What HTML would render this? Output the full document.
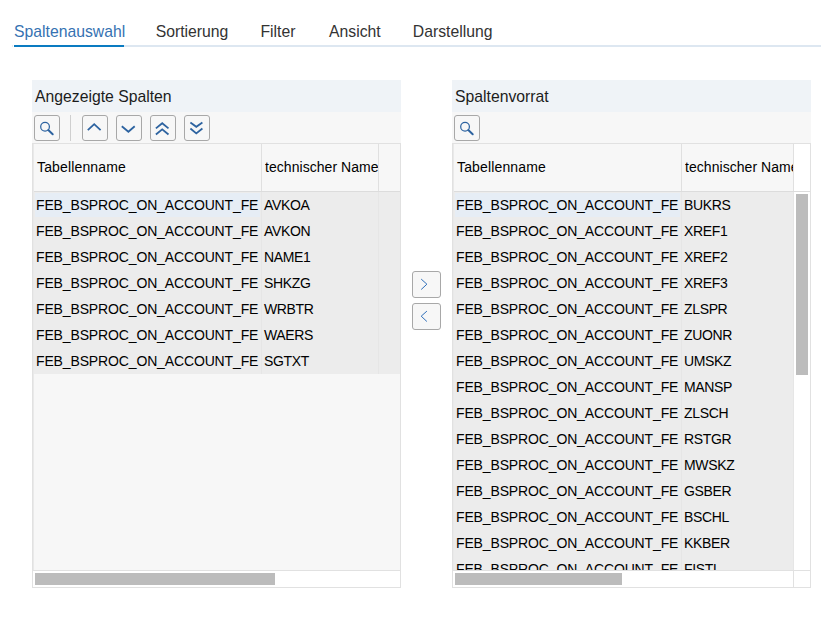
<!DOCTYPE html>
<html><head><meta charset="utf-8">
<style>
*{margin:0;padding:0;box-sizing:border-box}
html,body{width:833px;height:639px;background:#fff;overflow:hidden;font-family:"Liberation Sans",sans-serif;color:#000}
.a{position:absolute}
.tab{position:absolute;top:22px;font-size:15.75px;line-height:20px;color:#333;white-space:nowrap}
.hdr{top:80px;height:32px;background:#eff3f7}
.ttl{top:87px;font-size:15.75px;line-height:20px;color:#1c1c1c;white-space:nowrap}
.tb{top:112px;height:31px;background:#f7f7f7}
.btn{position:absolute;border:1px solid #a8a8a8;border-radius:3px;background:#f7f7f7}
.cell{font-size:14px;line-height:16px;white-space:nowrap;color:#000}
.feb{letter-spacing:-0.14px}
.row{height:26px;background:#ececec}
.th{font-size:14px;line-height:16px;white-space:nowrap;color:#000}
</style></head><body>

<div class="tab" style="left:14px;color:#3572b2">Spaltenauswahl</div>
<div class="tab" style="left:155.7px">Sortierung</div>
<div class="tab" style="left:260.5px">Filter</div>
<div class="tab" style="left:329px">Ansicht</div>
<div class="tab" style="left:412.8px">Darstellung</div>
<div class="a" style="left:124px;top:45px;width:697px;height:2px;background:#dde7f1"></div>
<div class="a" style="left:12px;top:45px;width:1px;height:2px;background:#e3eaf3"></div>
<div class="a" style="left:14px;top:45px;width:110px;height:2px;background:#0a7bc1"></div>
<div class="a hdr" style="left:32px;width:369px"></div>
<div class="a ttl" style="left:35px">Angezeigte Spalten</div>
<div class="a tb" style="left:32px;width:369px"></div>
<div class="btn" style="left:34px;top:115px;width:26px;height:26px"></div><svg class="a" style="left:34px;top:115px" width="26" height="26" viewBox="0 0 26 26"><circle cx="11.05" cy="11.75" r="4.35" fill="none" stroke="#2d63a0" stroke-width="1.25"/><path d="M14.3 15.1 L18.7 19.2" stroke="#2d63a0" stroke-width="2" stroke-linecap="round"/></svg>
<div class="a" style="left:70px;top:115px;width:1px;height:26px;background:#cfcfcf"></div>
<div class="btn" style="left:82px;top:115px;width:26px;height:26px"></div><svg class="a" style="left:82px;top:115px" width="26" height="26" viewBox="0 0 26 26"><polyline points="5.8,15.1 12.2,9.2 18.6,15.1" fill="none" stroke="#2d63a0" stroke-width="1.8" stroke-linecap="butt" stroke-linejoin="miter"/></svg>
<div class="btn" style="left:116px;top:115px;width:26px;height:26px"></div><svg class="a" style="left:116px;top:115px" width="26" height="26" viewBox="0 0 26 26"><polyline points="5.8,11.3 12.4,16.8 18.7,11.3" fill="none" stroke="#2d63a0" stroke-width="1.8" stroke-linecap="butt" stroke-linejoin="miter"/></svg>
<div class="btn" style="left:150px;top:115px;width:26px;height:26px"></div><svg class="a" style="left:150px;top:115px" width="26" height="26" viewBox="0 0 26 26"><polyline points="5.9,13.4 12.2,8.2 18.5,13.4" fill="none" stroke="#2d63a0" stroke-width="1.8" stroke-linecap="butt" stroke-linejoin="miter"/><polyline points="5.9,19.5 12.2,14.3 18.5,19.5" fill="none" stroke="#2d63a0" stroke-width="1.8" stroke-linecap="butt" stroke-linejoin="miter"/></svg>
<div class="btn" style="left:184px;top:115px;width:26px;height:26px"></div><svg class="a" style="left:184px;top:115px" width="26" height="26" viewBox="0 0 26 26"><polyline points="6.4,7.6 12.3,11.8 18.4,7.6" fill="none" stroke="#2d63a0" stroke-width="1.8" stroke-linecap="butt" stroke-linejoin="miter"/><polyline points="6.4,13.5 12.3,18.4 18.4,13.5" fill="none" stroke="#2d63a0" stroke-width="1.8" stroke-linecap="butt" stroke-linejoin="miter"/></svg>
<div class="a" style="left:32px;top:143px;width:369px;height:445px;background:#f7f7f7;border:1px solid #e1e1e1"></div>
<div class="a" style="left:33px;top:144px;width:1px;height:426px;background:#e9e9e9;z-index:2"></div>
<div class="a" style="left:33px;top:144px;width:367px;height:47px;background:#f7f7f7"></div>
<div class="a" style="left:33px;top:191px;width:367px;height:1px;background:#dcdcdc"></div>
<div class="a th" style="left:37px;top:159px;letter-spacing:0.15px">Tabellenname</div>
<div class="a th" style="left:265px;top:159px;width:113px;overflow:hidden;letter-spacing:0.05px">technischer Name</div>
<div class="a" style="left:261px;top:144px;width:1px;height:47px;background:#e0e0e0"></div>
<div class="a" style="left:378px;top:144px;width:1px;height:47px;background:#e0e0e0"></div>
<div class="a" style="left:33px;top:192px;width:367px;height:378px;overflow:hidden">
<div class="a row" style="left:0;top:0px;width:367px"></div>
<div class="a" style="left:2px;top:1px;width:225px;height:24px;background:#e6edf5"></div>
<div class="a cell feb" style="left:3px;top:5px">FEB_BSPROC_ON_ACCOUNT_FE</div>
<div class="a cell" style="letter-spacing:-0.35px;left:231px;top:5px">AVKOA</div>
<div class="a row" style="left:0;top:26px;width:367px"></div>
<div class="a cell feb" style="left:3px;top:31px">FEB_BSPROC_ON_ACCOUNT_FE</div>
<div class="a cell" style="letter-spacing:-0.35px;left:231px;top:31px">AVKON</div>
<div class="a row" style="left:0;top:52px;width:367px"></div>
<div class="a cell feb" style="left:3px;top:57px">FEB_BSPROC_ON_ACCOUNT_FE</div>
<div class="a cell" style="letter-spacing:-0.35px;left:231px;top:57px">NAME1</div>
<div class="a row" style="left:0;top:78px;width:367px"></div>
<div class="a cell feb" style="left:3px;top:83px">FEB_BSPROC_ON_ACCOUNT_FE</div>
<div class="a cell" style="letter-spacing:-0.35px;left:231px;top:83px">SHKZG</div>
<div class="a row" style="left:0;top:104px;width:367px"></div>
<div class="a cell feb" style="left:3px;top:109px">FEB_BSPROC_ON_ACCOUNT_FE</div>
<div class="a cell" style="letter-spacing:-0.35px;left:231px;top:109px">WRBTR</div>
<div class="a row" style="left:0;top:130px;width:367px"></div>
<div class="a cell feb" style="left:3px;top:135px">FEB_BSPROC_ON_ACCOUNT_FE</div>
<div class="a cell" style="letter-spacing:-0.35px;left:231px;top:135px">WAERS</div>
<div class="a row" style="left:0;top:156px;width:367px"></div>
<div class="a cell feb" style="left:3px;top:161px">FEB_BSPROC_ON_ACCOUNT_FE</div>
<div class="a cell" style="letter-spacing:-0.35px;left:231px;top:161px">SGTXT</div>
<div class="a" style="left:228px;top:0;width:1px;height:182px;background:#e6e6e6"></div>
<div class="a" style="left:345px;top:0;width:1px;height:182px;background:#e6e6e6"></div>
</div>
<div class="a" style="left:33px;top:570px;width:367px;height:1px;background:#e1e1e1"></div>
<div class="a" style="left:33px;top:571px;width:367px;height:16px;background:#fff"></div>
<div class="a" style="left:35px;top:573px;width:240px;height:12px;background:#bcbcbc"></div>
<div class="a hdr" style="left:452px;width:359px"></div>
<div class="a ttl" style="left:455px">Spaltenvorrat</div>
<div class="a tb" style="left:452px;width:359px"></div>
<div class="btn" style="left:454px;top:115px;width:26px;height:26px"></div><svg class="a" style="left:454px;top:115px" width="26" height="26" viewBox="0 0 26 26"><circle cx="11.05" cy="11.75" r="4.35" fill="none" stroke="#2d63a0" stroke-width="1.25"/><path d="M14.3 15.1 L18.7 19.2" stroke="#2d63a0" stroke-width="2" stroke-linecap="round"/></svg>
<div class="a" style="left:452px;top:143px;width:359px;height:445px;background:#f7f7f7;border:1px solid #e1e1e1"></div>
<div class="a" style="left:453px;top:144px;width:1px;height:426px;background:#e9e9e9;z-index:2"></div>
<div class="a" style="left:453px;top:144px;width:357px;height:47px;background:#f7f7f7"></div>
<div class="a" style="left:453px;top:191px;width:357px;height:1px;background:#dcdcdc"></div>
<div class="a th" style="left:457px;top:159px;letter-spacing:0.15px">Tabellenname</div>
<div class="a th" style="left:685px;top:159px;width:108px;overflow:hidden;letter-spacing:0.05px">technischer Name</div>
<div class="a" style="left:681px;top:144px;width:1px;height:47px;background:#e0e0e0"></div>
<div class="a" style="left:793px;top:144px;width:1px;height:47px;background:#e0e0e0"></div>
<div class="a" style="left:453px;top:192px;width:357px;height:378px;overflow:hidden">
<div class="a row" style="left:0;top:0px;width:340px"></div>
<div class="a" style="left:2px;top:1px;width:225px;height:24px;background:#e6edf5"></div>
<div class="a cell feb" style="left:3px;top:5px">FEB_BSPROC_ON_ACCOUNT_FE</div>
<div class="a cell" style="letter-spacing:-0.35px;left:231px;top:5px">BUKRS</div>
<div class="a row" style="left:0;top:26px;width:340px"></div>
<div class="a cell feb" style="left:3px;top:31px">FEB_BSPROC_ON_ACCOUNT_FE</div>
<div class="a cell" style="letter-spacing:-0.35px;left:231px;top:31px">XREF1</div>
<div class="a row" style="left:0;top:52px;width:340px"></div>
<div class="a cell feb" style="left:3px;top:57px">FEB_BSPROC_ON_ACCOUNT_FE</div>
<div class="a cell" style="letter-spacing:-0.35px;left:231px;top:57px">XREF2</div>
<div class="a row" style="left:0;top:78px;width:340px"></div>
<div class="a cell feb" style="left:3px;top:83px">FEB_BSPROC_ON_ACCOUNT_FE</div>
<div class="a cell" style="letter-spacing:-0.35px;left:231px;top:83px">XREF3</div>
<div class="a row" style="left:0;top:104px;width:340px"></div>
<div class="a cell feb" style="left:3px;top:109px">FEB_BSPROC_ON_ACCOUNT_FE</div>
<div class="a cell" style="letter-spacing:-0.35px;left:231px;top:109px">ZLSPR</div>
<div class="a row" style="left:0;top:130px;width:340px"></div>
<div class="a cell feb" style="left:3px;top:135px">FEB_BSPROC_ON_ACCOUNT_FE</div>
<div class="a cell" style="letter-spacing:-0.35px;left:231px;top:135px">ZUONR</div>
<div class="a row" style="left:0;top:156px;width:340px"></div>
<div class="a cell feb" style="left:3px;top:161px">FEB_BSPROC_ON_ACCOUNT_FE</div>
<div class="a cell" style="letter-spacing:-0.35px;left:231px;top:161px">UMSKZ</div>
<div class="a row" style="left:0;top:182px;width:340px"></div>
<div class="a cell feb" style="left:3px;top:187px">FEB_BSPROC_ON_ACCOUNT_FE</div>
<div class="a cell" style="letter-spacing:-0.35px;left:231px;top:187px">MANSP</div>
<div class="a row" style="left:0;top:208px;width:340px"></div>
<div class="a cell feb" style="left:3px;top:213px">FEB_BSPROC_ON_ACCOUNT_FE</div>
<div class="a cell" style="letter-spacing:-0.35px;left:231px;top:213px">ZLSCH</div>
<div class="a row" style="left:0;top:234px;width:340px"></div>
<div class="a cell feb" style="left:3px;top:239px">FEB_BSPROC_ON_ACCOUNT_FE</div>
<div class="a cell" style="letter-spacing:-0.35px;left:231px;top:239px">RSTGR</div>
<div class="a row" style="left:0;top:260px;width:340px"></div>
<div class="a cell feb" style="left:3px;top:265px">FEB_BSPROC_ON_ACCOUNT_FE</div>
<div class="a cell" style="letter-spacing:-0.35px;left:231px;top:265px">MWSKZ</div>
<div class="a row" style="left:0;top:286px;width:340px"></div>
<div class="a cell feb" style="left:3px;top:291px">FEB_BSPROC_ON_ACCOUNT_FE</div>
<div class="a cell" style="letter-spacing:-0.35px;left:231px;top:291px">GSBER</div>
<div class="a row" style="left:0;top:312px;width:340px"></div>
<div class="a cell feb" style="left:3px;top:317px">FEB_BSPROC_ON_ACCOUNT_FE</div>
<div class="a cell" style="letter-spacing:-0.35px;left:231px;top:317px">BSCHL</div>
<div class="a row" style="left:0;top:338px;width:340px"></div>
<div class="a cell feb" style="left:3px;top:343px">FEB_BSPROC_ON_ACCOUNT_FE</div>
<div class="a cell" style="letter-spacing:-0.35px;left:231px;top:343px">KKBER</div>
<div class="a row" style="left:0;top:364px;width:340px"></div>
<div class="a cell feb" style="left:3px;top:369px">FEB_BSPROC_ON_ACCOUNT_FE</div>
<div class="a cell" style="letter-spacing:-0.35px;left:231px;top:369px">FISTL</div>
<div class="a" style="left:228px;top:0;width:1px;height:390px;background:#e6e6e6"></div>
<div class="a" style="left:340px;top:0;width:1px;height:390px;background:#e6e6e6"></div>
</div>
<div class="a" style="left:453px;top:570px;width:357px;height:1px;background:#e1e1e1"></div>
<div class="a" style="left:453px;top:571px;width:357px;height:16px;background:#fff"></div>
<div class="a" style="left:455px;top:573px;width:167px;height:12px;background:#bcbcbc"></div>
<div class="a" style="left:794px;top:192px;width:16px;height:378px;background:#fff"></div>
<div class="a" style="left:794px;top:144px;width:16px;height:47px;background:#fff"></div>
<div class="a" style="left:796px;top:194px;width:12px;height:181px;background:#bcbcbc"></div>
<div class="a" style="left:793px;top:570px;width:1px;height:17px;background:#e1e1e1"></div>
<div class="btn" style="left:412px;top:271px;width:29px;height:27px"></div><svg class="a" style="left:412px;top:271px" width="29" height="27" viewBox="0 0 29 27"><polyline points="9.2,8.1 14.9,13.2 9.2,18.5" fill="none" stroke="#2f6fba" stroke-width="1.0" stroke-linecap="butt" stroke-linejoin="miter"/></svg>
<div class="btn" style="left:412px;top:303px;width:29px;height:27px"></div><svg class="a" style="left:412px;top:303px" width="29" height="27" viewBox="0 0 29 27"><polyline points="14.9,8.1 9.2,13.2 14.9,18.5" fill="none" stroke="#2f6fba" stroke-width="1.0" stroke-linecap="butt" stroke-linejoin="miter"/></svg>
</body></html>
